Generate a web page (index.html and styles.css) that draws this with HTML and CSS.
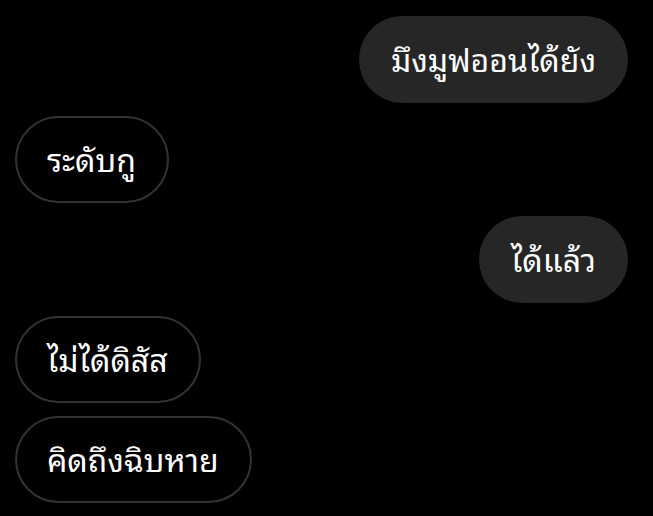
FILE: index.html
```html
<!DOCTYPE html>
<html lang="th">
<head>
<meta charset="utf-8">
<link rel="stylesheet" href="styles.css">
</head>
<body>
<div class="chat">
  <div class="row out"><div class="bubble filled">มึงมูฟออนได้ยัง</div></div>
  <div class="row in"><div class="bubble outline">ระดับกู</div></div>
  <div class="row out"><div class="bubble filled">ได้แล้ว</div></div>
  <div class="row in"><div class="bubble outline">ไม่ได้ดิสัส</div></div>
  <div class="row in"><div class="bubble outline">คิดถึงฉิบหาย</div></div>
</div>
</body>
</html>
```
FILE: styles.css
```css
html, body {
  margin: 0;
  padding: 0;
  background: #000;
}
.chat {
  display: flex;
  flex-direction: column;
  gap: 13px;
  padding: 16px 25px 0 15px;
  font-family: "Noto Sans Thai Looped", "Loma", "Garuda", "Tlwg Typo", "Waree", "Sarabun", "Noto Serif Thai", "Noto Sans", sans-serif;
}
.row {
  display: flex;
}
.row.out { justify-content: flex-end; }
.row.in { justify-content: flex-start; }
.bubble {
  box-sizing: border-box;
  height: 87px;
  border-radius: 44px;
  padding: 0 32px 5px;
  display: flex;
  align-items: center;
  color: #fff;
  font-size: 32px;
  white-space: nowrap;
}
.filled {
  background: #262626;
}
.outline {
  border: 2px solid #333;
  padding: 0 31px 5px 30px;
}
```
